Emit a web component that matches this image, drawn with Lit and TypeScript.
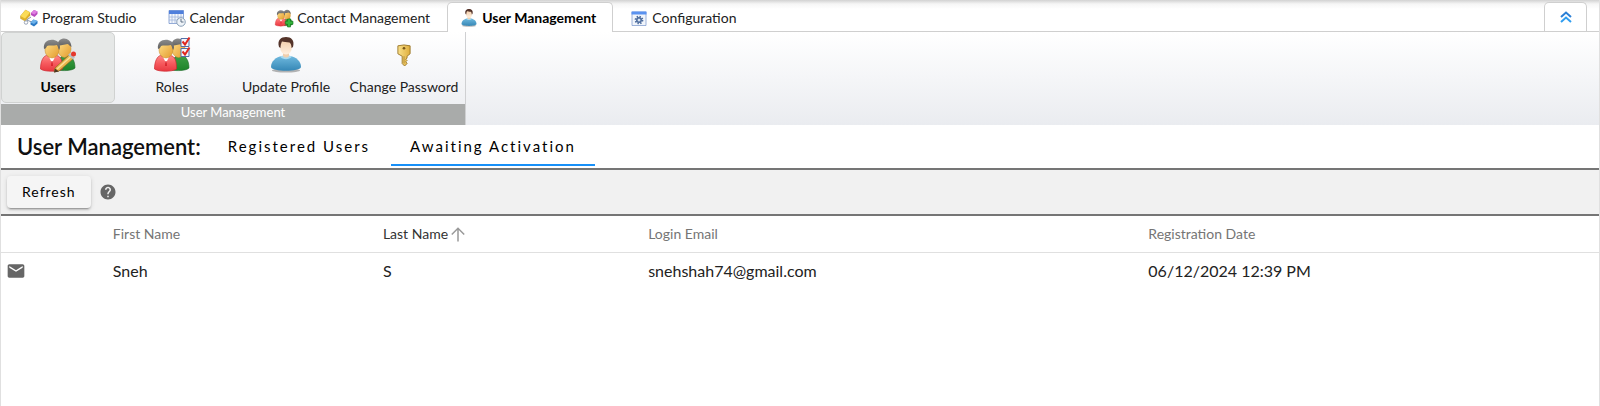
import { LitElement, html, css, svg } from "lit";
import { customElement, property, state } from "lit/decorators.js";
import { classMap } from "lit/directives/class-map.js";

const defs = svg`<defs>
  <linearGradient id="red" x1="0" y1="0" x2="0" y2="1"><stop offset="0" stop-color="#ff8a86"/><stop offset=".5" stop-color="#f65a5e"/><stop offset="1" stop-color="#e83840"/></linearGradient>
  <linearGradient id="green" x1="0" y1="0" x2="0" y2="1"><stop offset="0" stop-color="#3f9f45"/><stop offset="1" stop-color="#1d8429"/></linearGradient>
  <linearGradient id="face" x1="0" y1="0" x2="1" y2="1"><stop offset="0" stop-color="#ffe08a"/><stop offset="1" stop-color="#e39a2c"/></linearGradient>
  <linearGradient id="hair" x1="0" y1="0" x2="0" y2="1"><stop offset="0" stop-color="#8b8b8b"/><stop offset="1" stop-color="#5c5c5c"/></linearGradient>
  <linearGradient id="blue" x1="0" y1="0" x2="0" y2="1"><stop offset="0" stop-color="#6fb9de"/><stop offset="1" stop-color="#3587b6"/></linearGradient>
  <linearGradient id="skin" x1="0" y1="0" x2="0" y2="1"><stop offset="0" stop-color="#f3cda8"/><stop offset="1" stop-color="#fff0e0"/></linearGradient>
  <linearGradient id="gold" x1="0" y1="0" x2="1" y2="0"><stop offset="0" stop-color="#f9e08a"/><stop offset="1" stop-color="#dfae3c"/></linearGradient>
</defs>`;

const pair = svg`
  <path d="M18 33c0-9 2-15 8-15s9 6 9 13c-3 3-13 3-17 2z" fill="url(#green)" stroke="#1c6a26" stroke-width=".6"/>
  <ellipse cx="24.500" cy="12" rx="6.500" ry="8.500" fill="url(#face)" stroke="#c48a2c" stroke-width=".5"/>
  <path d="M17 9c1-10 14-10 14.500 1-2-1-3-3-4-3-3 1-7 1-10.500 2z" fill="url(#hair)"/>
  <path d="M.5 32c0-8 3-13 6-13.500l5 2 5-2c5 1 6 6 6 13.500-4 3-18 3-22 0z" fill="url(#red)" stroke="#cf2a30" stroke-width=".7"/>
  <path d="M9 20l3 6 3-6z" fill="#fff"/>
  <path d="M11.500 24h1l.5 5h-2z" fill="#d6242c"/>
  <ellipse cx="12" cy="13" rx="7" ry="8" fill="url(#face)" stroke="#c48a2c" stroke-width=".5"/>
  <path d="M4 12C2 0 20 0 20 10c0 2-1 3-1 3-1-2-1-4-2-5-4 1-8 0-10 1-1 2-1 2-3 3z" fill="url(#hair)"/>`;

const person = svg`
  <ellipse cx="18" cy="33.500" rx="14" ry="2" fill="#000" opacity=".28"/>
  <path d="M3 30c0-6 5-10 11-11h8c6 1 11 5 11 11-1 5-29 5-30 0z" fill="url(#blue)"/>
  <path d="M12 19.500c3 3.500 9 3.500 12 0l-3-1h-6z" fill="#a9daf0"/>
  <path d="M15 14h6v5c-1 2-5 2-6 0z" fill="#f0cfae"/>
  <ellipse cx="18" cy="10" rx="6" ry="7.500" fill="url(#skin)"/>
  <path d="M11 10C9 3 13 0 18 0s9 3 7 10l-1.500 1c0-3-1-5-2-5.500-3 0-6-1-7.500-1-1 2-1.500 4-1.500 6.500z" fill="#54342a"/>`;

const icons: Record<string, unknown> = {
  users: svg`${pair}
    <path d="M15 31l14-13 4 4-14 12-5 1z" fill="#e9b64c" stroke="#8b6421" stroke-width=".7"/>
    <path d="M17 32l14-12.500" stroke="#fbe09a" stroke-width="1.500"/>
    <path d="M14 35.500l1-4 4 3z" fill="#4b3823"/>
    <path d="M28 18l2-2 5 4.500-2 2z" fill="#b9c2c4"/>
    <circle cx="33.500" cy="17" r="2.500" fill="#e5382c"/>`,
  roles: svg`${pair}
    <g fill="#f4f6fb" stroke="#5470a8" stroke-width="1"><path d="M27 1.500h8v8h-8zM27 11.500h8v8h-8z"/></g>
    <path d="M28.500 4.500l2.500 3 4.500-7M28.500 14.500l2.500 3 4.500-7" fill="none" stroke="#e02820" stroke-width="2"/>`,
  person,
  contacts: svg`${pair}
    <path d="M25 20h6v4.500h5v6h-5V36h-6v-5.500h-4.500v-6H25z" fill="#35b53c" stroke="#0f6d19" stroke-width="1.200"/>`,
  key: svg`
    <path d="M8 3q10-3 20 0v13l-5 4v3l-2 2 2 2-2 2 2 3-4 4-4-4V20l-7-4z" fill="url(#gold)" stroke="#9a7628" stroke-width="1.500"/>
    <path d="M18 20v12" stroke="#b08a34" stroke-width="1.500"/>
    <circle cx="18" cy="7" r="2.200" fill="#765619"/>`,
  studio: svg`
    <path d="M13 22l9-6M13 22l11 4" stroke="#8794aa" stroke-width="2" fill="none"/>
    <path d="M1 14L11 2l9 5v6L10 24l-9-5z" fill="#e1b32b" stroke="#b58d1c" stroke-width=".8"/>
    <path d="M1 14L11 2l9 5-10 12z" fill="#fbdc58"/>
    <path d="M22 8l6-6 7 3v5l-6 6-7-4z" fill="#b94bbf"/><path d="M22 8l6-6 7 3-6 6z" fill="#df7fe2"/>
    <path d="M21 27l6-6 8 3v5l-7 6-7-4z" fill="#2c7ac4"/><path d="M21 27l6-6 8 3-7 6z" fill="#6db2ea"/>
    <circle cx="12" cy="27" r="3.500" fill="#fff" stroke="#7c8aa2" stroke-width="1.500"/>`,
  calendar: svg`
    <path d="M2 3h29v26H2z" fill="#f4f7fc" stroke="#6f8fca" stroke-width="1.500"/>
    <path d="M2 3h29v7H2z" fill="#4f7fdc"/>
    <path d="M2 16h29M2 22h29M8 10v19M14 10v19M20 10v19M26 10v19" stroke="#9fb3da" stroke-width="1.500"/>
    <circle cx="26" cy="26" r="8.500" fill="#eef3f8" stroke="#8aa0b8" stroke-width="2"/>
    <path d="M26 20v6h5" fill="none" stroke="#50647c" stroke-width="1.800"/>`,
  config: svg`
    <path d="M4 6h28v27H4z" fill="#f1f5fb" stroke="#7d9ace" stroke-width="1.500"/>
    <path d="M3 5h30v6H3z" fill="#5a92f0"/>
    <circle cx="18" cy="22" r="7" fill="none" stroke="#4c6b9c" stroke-width="3.500" stroke-dasharray="2.800 2.700"/>
    <circle cx="18" cy="22" r="4.500" fill="#b8cbe6" stroke="#4c6b9c" stroke-width="3"/>
    <circle cx="18" cy="22" r="1.600" fill="#fff"/>`,
};

@customElement("ribbon-icon")
export class RibbonIcon extends LitElement {
  @property() name = "person";

  static styles = css`
    :host { display: block; width: 18px; height: 18px; flex: none; }
    svg { display: block; width: 100%; height: 100%; overflow: visible; }
  `;

  render() {
    return html`<svg viewBox="0 0 36 36" aria-hidden="true">${defs}${icons[this.name]}</svg>`;
  }
}

interface Item { label: string; icon: string; }
interface User { first: string; last: string; email: string; date: string; }

@customElement("app-root")
export class AppRoot extends LitElement {
  @state() private ribbonTab = "User Management";
  @state() private action = "Users";
  @state() private view = "Awaiting Activation";

  private readonly tabs: Item[] = [
    { label: "Program Studio", icon: "studio" },
    { label: "Calendar", icon: "calendar" },
    { label: "Contact Management", icon: "contacts" },
    { label: "User Management", icon: "person" },
    { label: "Configuration", icon: "config" },
  ];
  private readonly actions: Item[] = [
    { label: "Users", icon: "users" },
    { label: "Roles", icon: "roles" },
    { label: "Update Profile", icon: "person" },
    { label: "Change Password", icon: "key" },
  ];
  private readonly views = ["Registered Users", "Awaiting Activation"];
  private readonly users: User[] = [
    { first: "Sneh", last: "S", email: "snehshah74@gmail.com", date: "06/12/2024 12:39 PM" },
  ];

  static styles = css`
    :host {
      display: block;
      box-sizing: border-box;
      min-height: 100vh;
      border: solid #e0e0e0;
      border-width: 0 1px;
      background: #fff;
      color: #222;
      font: 14px/20px Lato, "Liberation Sans", sans-serif;
    }
    *, *::before, *::after { box-sizing: border-box; }
    button { margin: 0; border: 0; background: none; color: inherit; font: inherit; cursor: pointer; }
    .tabbar {
      display: flex;
      align-items: flex-end;
      gap: 3px;
      height: 32px;
      padding: 0 12px 0 5px;
      border-bottom: 1px solid #cfcfcf;
      background: linear-gradient(#d2d2d2, #f6f6f6 4px, #fff 9px);
    }
    .tab {
      display: flex;
      align-items: center;
      gap: 4px;
      height: 30px;
      margin-bottom: -1px;
      padding: 0 13px;
      border: 1px solid transparent;
      border-bottom: 0;
      border-radius: 5px 5px 0 0;
      white-space: nowrap;
    }
    .tab.active { padding: 0 16px 0 12px; border-color: #cfcfcf; background: #fff; color: #000; font-weight: 700; }
    .collapse {
      display: grid;
      place-items: center;
      width: 43px;
      height: 29px;
      margin-left: auto;
      padding: 0;
      border: 1px solid #cfcfcf;
      border-bottom: 0;
      border-radius: 5px 5px 0 0;
      background: #fff;
    }
    .ribbon { display: flex; background: linear-gradient(#fff, #eaecf0); }
    .group { border-right: 1px solid #cfd0d2; }
    .actions { display: flex; height: 72px; }
    .action {
      display: flex;
      flex-direction: column;
      align-items: center;
      width: 114px;
      height: 71px;
      padding: 4px 0 0;
      border: 1px solid transparent;
      border-radius: 5px;
      white-space: nowrap;
    }
    .action:last-child { width: 122px; }
    .action.active { border-color: #d0d2d1; background: #e6e8e7; color: #000; font-weight: 700; }
    .slot { display: grid; place-items: center; height: 36px; margin-bottom: 4px; }
    .big { width: 36px; height: 36px; }
    .key { width: 22px; height: 22px; }
    .caption { height: 21px; background: #a9abaa; color: #fff; font-size: 13px; line-height: 17px; text-align: center; }
    .heading { display: flex; align-items: stretch; height: 45px; padding-left: 16px; border-bottom: 2px solid #757575; }
    h1 { margin: 0 8px 0 0; color: #111; font-size: 22px; line-height: 43px; font-weight: 600; white-space: nowrap; }
    .views { display: flex; gap: 2px; }
    .view {
      height: 41px;
      padding: 2px 19px 0;
      border-bottom: 2px solid transparent;
      color: #000;
      font-size: 15px;
      letter-spacing: 2px;
      white-space: nowrap;
    }
    .view.active { border-color: #1890f8; }
    .toolbar { display: flex; align-items: center; gap: 8px; height: 46px; padding: 0 6px; border-bottom: 2px solid #757575; background: #f1f1f1; }
    .refresh {
      height: 32px;
      padding: 0 15px;
      border-radius: 4px;
      background: #f5f5f5;
      color: #000;
      letter-spacing: 1px;
      box-shadow: 0 3px 1px -2px rgba(0, 0, 0, .2), 0 2px 2px rgba(0, 0, 0, .14), 0 1px 5px rgba(0, 0, 0, .12);
    }
    .help { padding: 0; }
    svg { display: block; }
    table { width: 100%; border-collapse: collapse; table-layout: fixed; }
    th, td { padding: 0; text-align: left; white-space: nowrap; }
    th { height: 36px; border-bottom: 1px solid #e0e0e0; color: #757575; font-size: 14px; font-weight: 400; }
    td { height: 37px; font-size: 16px; }
    .c-mail { width: 7%; }
    .c-first { width: 16.9%; }
    .c-last { width: 16.6%; }
    .c-email { width: 31.3%; }
    .sort { display: flex; align-items: center; gap: 1px; padding: 0; color: #333; }
    .mail { display: block; padding: 0 5px; }
  `;

  private icon(i: Item) {
    return html`<span class="slot"><ribbon-icon class=${i.icon === "key" ? "key" : "big"} name=${i.icon}></ribbon-icon></span>`;
  }

  render() {
    return html`
      <nav class="tabbar">
        ${this.tabs.map((t) => html`
          <button class=${classMap({ tab: true, active: t.label === this.ribbonTab })} @click=${() => (this.ribbonTab = t.label)}>
            <ribbon-icon name=${t.icon}></ribbon-icon>${t.label}
          </button>`)}
        <button class="collapse" aria-label="Collapse ribbon">
          <svg width="12" height="12" viewBox="0 0 12 12" fill="none" stroke-width="2">
            <path d="M1 6l5-4.500L11 6" stroke="#2a7fd6"/><path d="M1 11l5-4.500 5 4.500" stroke="#2f9df0"/>
          </svg>
        </button>
      </nav>
      <section class="ribbon">
        <div class="group">
          <div class="actions">
            ${this.actions.map((a) => html`
              <button class=${classMap({ action: true, active: a.label === this.action })} @click=${() => (this.action = a.label)}>
                ${this.icon(a)}${a.label}
              </button>`)}
          </div>
          <div class="caption">User Management</div>
        </div>
      </section>
      <header class="heading">
        <h1>User Management:</h1>
        <div class="views">
          ${this.views.map((v) => html`
            <button class=${classMap({ view: true, active: v === this.view })} @click=${() => (this.view = v)}>${v}</button>`)}
        </div>
      </header>
      <div class="toolbar">
        <button class="refresh">Refresh</button>
        <button class="help" aria-label="Help">
          <svg width="18" height="18" viewBox="0 0 24 24" fill="#666"><path d="M12 2C6.480 2 2 6.480 2 12s4.480 10 10 10 10-4.480 10-10S17.520 2 12 2zm1 17h-2v-2h2v2zm2.070-7.750l-.9.920C13.450 12.900 13 13.500 13 15h-2v-.5c0-1.100.45-2.100 1.170-2.830l1.240-1.260c.37-.36.59-.86.59-1.410 0-1.100-.9-2-2-2s-2 .9-2 2H8c0-2.210 1.790-4 4-4s4 1.790 4 4c0 .88-.36 1.680-.93 2.250z"/></svg>
        </button>
      </div>
      <table>
        <thead>
          <tr>
            <th class="c-mail"></th>
            <th class="c-first">First Name</th>
            <th class="c-last" aria-sort="ascending">
              <button class="sort">Last Name
                <svg width="18" height="18" viewBox="0 0 24 24" fill="#999"><path d="M3 12l1.410 1.410L11 6.830V22h2V6.830l6.580 6.590L21 12l-9-9-9 9z"/></svg>
              </button>
            </th>
            <th class="c-email">Login Email</th>
            <th>Registration Date</th>
          </tr>
        </thead>
        <tbody>
          ${this.users.map((u) => html`
            <tr>
              <td>
                <button class="mail" aria-label="Send email">
                  <svg width="20" height="20" viewBox="0 0 24 24" fill="#666"><path d="M20 4H4c-1.100 0-1.990.9-1.990 2L2 18c0 1.100.9 2 2 2h16c1.100 0 2-.9 2-2V6c0-1.100-.9-2-2-2zm0 4l-8 5-8-5V6l8 5 8-5v2z"/></svg>
                </button>
              </td>
              <td>${u.first}</td><td>${u.last}</td><td>${u.email}</td><td>${u.date}</td>
            </tr>`)}
        </tbody>
      </table>`;
  }
}
